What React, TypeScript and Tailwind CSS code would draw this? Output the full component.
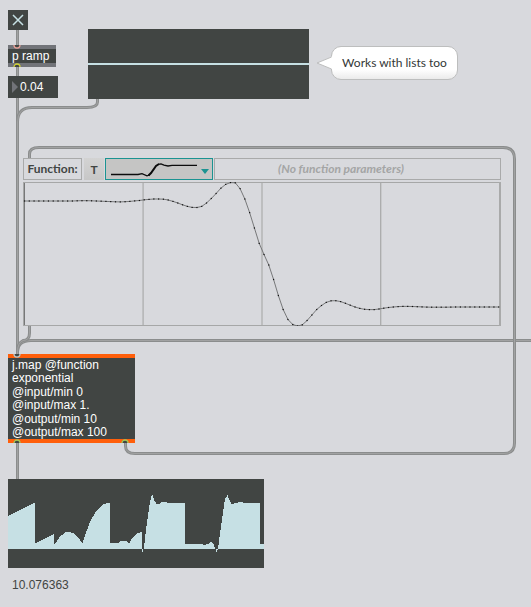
import React from "react";

const WIRES = [
  "M17.5 30V46",
  "M17.5 67V76",
  "M17.5 98V354",
  "M17.5 443V479",
  "M97.5 99V102Q97.5 107.5 87 107.5H32Q17.5 107.5 17.5 122",
  "M531 340.5H31Q17.5 340.5 17.5 352",
  "M29.5 326V333Q29.5 340.5 23 340.5Q17.5 343 17.5 352",
  "M125.5 443V446Q125.5 453.5 135 453.5H504Q514.5 453.5 514.5 443V159Q514.5 147.5 503 147.5H39Q29.5 147.5 29.5 154V158",
];

// Sampled response of the mapping function, as offsets inside the 478 x 144 plot.
const CURVE: number[] = [
  19, 19, 19, 19, 19, 19, 19, 19, 19, 19, 19, 18.8, 18.7, 18.7, 18.8, 19, 19.2, 19.4, 19.6, 19.8,
  19.9, 19.7, 19.4, 18.9, 18.5, 17.8, 17.4, 17, 17, 17.2, 18, 19.4, 21, 22.8, 24.4, 25.4,
  25.5, 24.4, 21, 16.5, 11.5, 6.2, 2.4, 0.6, 0.8, 6.6, 17, 30.6, 46, 61.4,
  72.5, 83, 97.5, 113.5, 127.5, 137.5, 142.5, 144, 142.8, 138.5, 133, 127.5, 123.5, 120.4, 118.8, 118.7,
  119.6, 121.3, 123.2, 125, 126.4, 127.3, 127.6, 127.6, 127, 126.2, 125.5, 125, 124.6, 124.4, 124.4, 124.5,
  124.7, 124.9, 125.1, 125.2, 125.2, 125.2, 125.2, 125.1, 125, 125, 125, 125, 125, 125, 125, 125, 125, 125,
];

const TRACE =
  "M0 70V37L27 23.5V64.5L46 55V65L47.5 64L52 57.5L57 53.5L62 53L67 55L72 61L74.5 64.5L76 59L82 43L88 32L94 26L99 24L102 23.8V64.5L107 64L110 64.6L113 62L118 62L121 64.5L125 58L129 54.5L134 53V70L134.5 73L136 69L138 51L141 29L143 18L144.5 16L146 21L149 25.5L152 24.5L154 23L159 23.5L177 23.8V65H194L196 66L200 65L203 62.5L205 64L207 69L208.5 73L210 70L211 62L214 41L217 20L219.5 16L221 20L224 25.5L227 24L232 23L237 23.8H252V65H256V70Z";

function Wires() {
  return (
    <svg className="absolute inset-0 h-full w-full" fill="none" aria-hidden="true">
      {WIRES.map((d) => (
        <g key={d}>
          <path d={d} stroke="#8b8d8d" strokeWidth="3" />
          <path d={d} stroke="#a1a2a2" strokeWidth="1" />
        </g>
      ))}
      <path d="M531 340.5h3000" stroke="#8b8d8d" strokeWidth="3" />
    </svg>
  );
}

function Port({ kind, className }: { kind: "in" | "hot" | "out" | "cold"; className: string }) {
  const color = { in: "#e9a097", hot: "#b9c7c9", out: "#d1d233", cold: "#a5c957" }[kind];
  const top = kind === "in" || kind === "hot";
  return (
    <svg className={"absolute h-1 w-2 " + className} viewBox="0 0 8 4" aria-hidden="true">
      <path
        d={top ? "M1 0a3 3 0 0 0 6 0" : "M1 4a3 3 0 0 1 6 0"}
        fill="#414543"
        stroke={color}
        strokeWidth="1.3"
      />
    </svg>
  );
}

function Plot() {
  const points = CURVE.map((y, i) => [1.5 + i * 4.79, y]);
  return (
    <svg className="mt-[2px] block h-36 w-full" viewBox="0 0 478 144" role="img" aria-label="Function plot">
      <g shapeRendering="crispEdges">
        <rect x="119" y="1" width="1" height="142" fill="#c0c1c3" />
        <rect x="120" y="1" width="1" height="142" fill="#b8b9ba" />
        <rect x="238" y="1" width="2" height="142" fill="#bdbebf" />
        <rect x="357" y="1" width="1" height="142" fill="#acadad" />
        <rect x="358" y="1" width="1" height="142" fill="#c8c9cb" />
        <rect x="0" y="0" width="478" height="1" fill="#a6a7a7" />
        <rect x="0" y="143" width="478" height="1" fill="#a6a7a7" />
        <rect x="0" y="0" width="1" height="144" fill="#a6a7a7" />
        <rect x="1" y="1" width="1" height="142" fill="#777878" />
        <rect x="476" y="0" width="2" height="144" fill="#a9aaaa" />
      </g>
      <polyline points={points.map((p) => p.join(",")).join(" ")} fill="none" stroke="#6c6d6e" strokeWidth="0.9" />
      {points.map(([x, y]) => (
        <rect key={x} x={x - 0.6} y={y - 0.6} width="1.2" height="1.2" fill="#111" />
      ))}
    </svg>
  );
}

function FunctionPanel() {
  return (
    <section className="absolute left-[23px] top-[158px] w-[478px] bg-[#d8d9dd]">
      <div className="flex h-[22px] font-['Lato',sans-serif] text-[12px] font-bold">
        <label
          htmlFor="function"
          className="flex w-[59px] items-center justify-center border border-[#a9aaaa] text-[#414543]"
        >
          Function:
        </label>
        <button
          type="button"
          className="ml-[2px] w-5 bg-linear-to-b from-[#d3d3d3] to-[#c7c7c7] pt-[2px] text-[12px] text-[#414543]"
        >
          T
        </button>
        <div className="ml-px grid w-[108px]">
          <select
            id="function"
            className="col-start-1 row-start-1 appearance-none border border-[#1b9391] bg-[#c5c5c4]"
            defaultValue="exponential"
          >
            <option value="exponential" aria-label="exponential"></option>
          </select>
          <svg
            className="pointer-events-none col-start-1 row-start-1"
            width="108"
            height="22"
            fill="none"
            stroke="#0c0c0c"
            aria-hidden="true"
          >
            <path d="M6 16.5H33L37 15.6L42 17.8L44.5 17" strokeWidth="1.3" />
            <path d="M43.5 17.5L46 15L51 8L54 6" strokeWidth="2" />
            <path d="M53 6.3L56 5.8L59 7.2L63 8L67 7.4H92" strokeWidth="1.3" />
            <path d="M96 11H104L100 16Z" fill="#1b9391" stroke="none" />
          </svg>
        </div>
        <div className="ml-px flex flex-1 items-center border border-[#a9aaaa] pl-[63px] italic text-[#a4a5a5]">
          (No function parameters)
        </div>
      </div>
      <Plot />
    </section>
  );
}

function Bubble() {
  return (
    <div className="absolute left-[331px] top-[46px] flex h-[34px] w-[127px] items-center justify-center rounded-[10px] border border-[#bdbebe] bg-linear-to-b from-white from-70% to-[#ebebeb] font-['Lato',sans-serif] text-[12px] text-[#333736]">
      <svg className="absolute -left-4 top-[7px]" width="17" height="16" aria-hidden="true">
        <path d="M17 1.5L15 3L1 9L15 15L17 15" fill="#fff" />
        <path d="M15.5 3L1 9L15.5 15" fill="none" stroke="#bdbebe" />
      </svg>
      Works with lists too
    </div>
  );
}

export default function App() {
  return (
    <main className="relative min-h-[607px] w-full overflow-hidden bg-[#d8d9dd] font-['Liberation_Sans',Arial,sans-serif] text-[12px] text-white">
      <Wires />

      <label className="absolute left-2 top-[10px] grid size-5 bg-[#414543]">
        <input
          type="checkbox"
          defaultChecked
          aria-label="Toggle ramp"
          className="col-start-1 row-start-1 appearance-none"
        />
        <svg className="pointer-events-none col-start-1 row-start-1" viewBox="0 0 20 20" aria-hidden="true">
          <path d="M5 5L15 15M15 5L5 15" stroke="#c6e0e4" strokeWidth="1.5" />
        </svg>
      </label>

      <div className="absolute left-2 top-[45px] h-[22px] w-12 border-y-4 border-[#727479] bg-[#414543] pl-1 leading-[14px]">
        p ramp
        <Port kind="in" className="left-[5px] -top-1" />
        <Port kind="out" className="left-[5px] -bottom-1" />
      </div>

      <div className="absolute left-2 top-[76px] flex h-[22px] w-[50px] items-center bg-[#414543] pl-1">
        <svg width="6" height="12" aria-hidden="true">
          <path d="M0 0L6 6L0 12Z" fill="#727479" />
        </svg>
        <input aria-label="Ramp value" defaultValue="0.04" className="ml-[2px] w-8 bg-transparent text-white" />
      </div>

      <div className="absolute left-[88px] top-[29px] flex h-[70px] w-[221px] items-center bg-[#414543]">
        <div className="h-[2px] w-full bg-[#c6e0e4]" />
      </div>

      <Bubble />
      <FunctionPanel />

      <div className="absolute left-2 top-[354px] flex h-[89px] w-[127px] flex-col justify-between border-y-4 border-[#ff5f0b] bg-[#414543] pl-1 pt-px leading-[13px]">
        <span>j.map @function</span>
        <span>exponential</span>
        <span>@input/min 0</span>
        <span>@input/max 1.</span>
        <span>@output/min 10</span>
        <span>@output/max 100</span>
        <Port kind="hot" className="left-[5px] -top-1" />
        <Port kind="cold" className="left-[5px] -bottom-1" />
        <Port kind="cold" className="left-[113px] -bottom-1" />
      </div>

      <div className="absolute left-2 top-[479px] h-[89px] w-64 bg-[#414543]">
        <svg width="256" height="89" role="img" aria-label="Output history">
          <path d={TRACE} fill="#c6e0e4" shapeRendering="crispEdges" />
        </svg>
      </div>

      <input
        aria-label="Output value"
        defaultValue="10.076363"
        className="absolute left-3 top-[576px] w-24 bg-transparent leading-[18px] text-[#414543]"
      />
    </main>
  );
}
